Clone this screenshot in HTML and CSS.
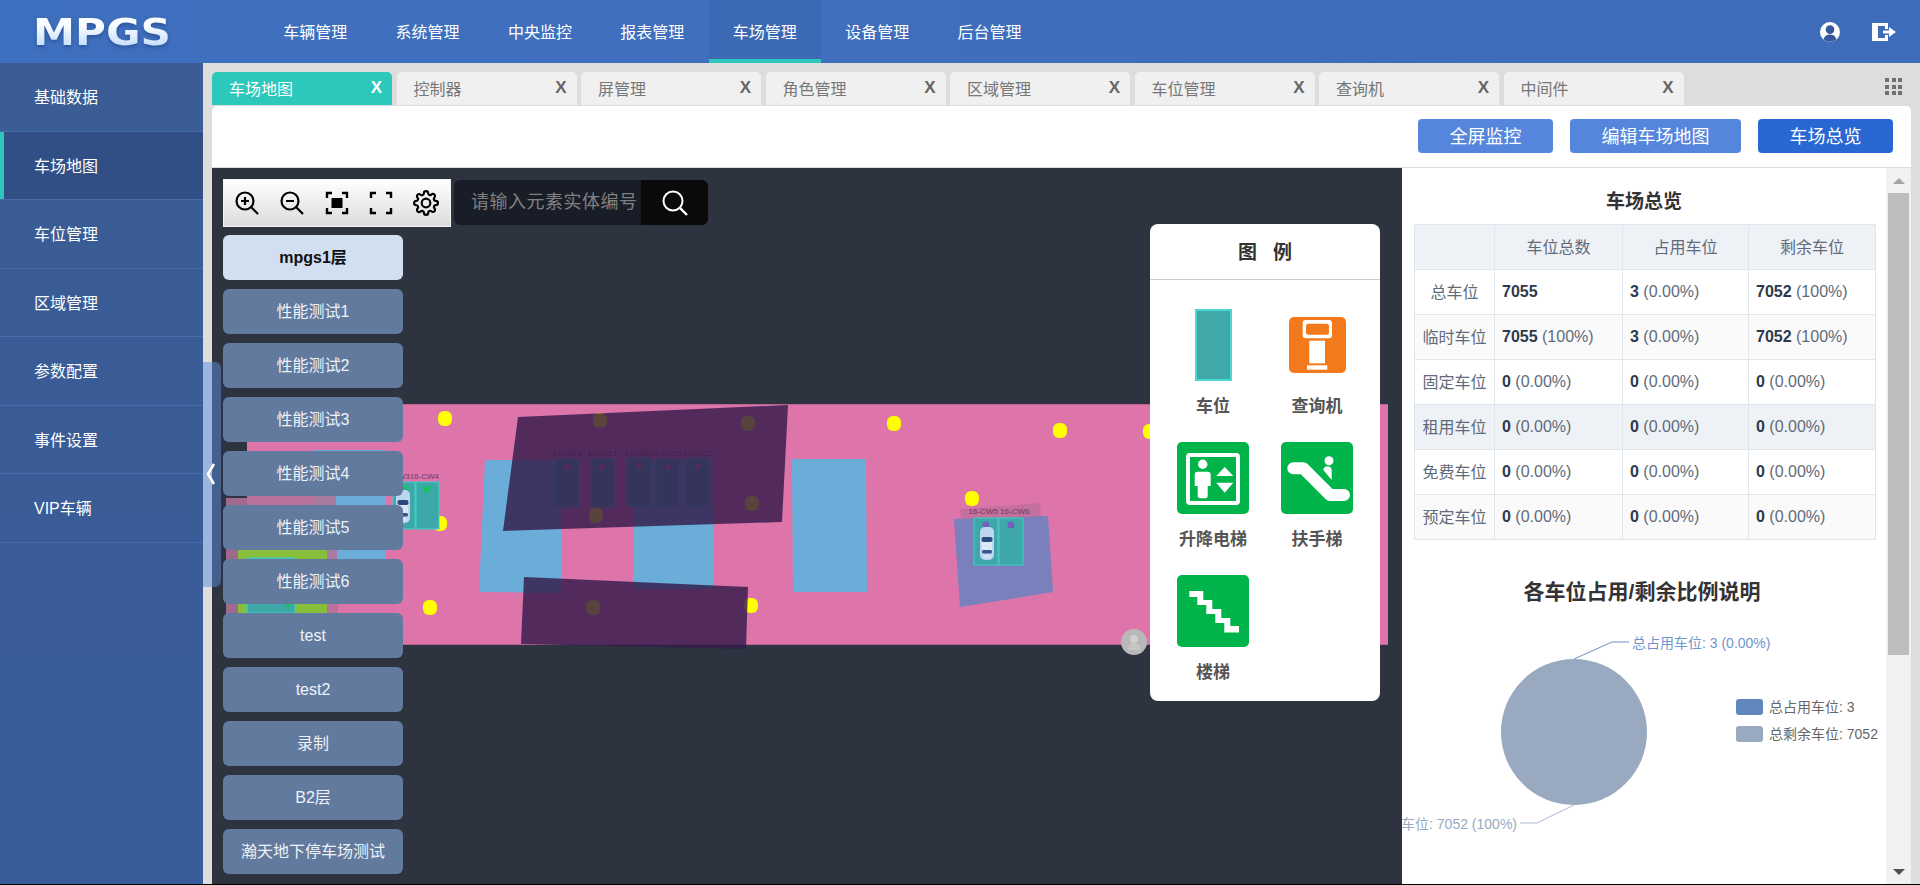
FILE: index.html
```html
<!DOCTYPE html>
<html lang="zh-CN">
<head>
<meta charset="utf-8">
<title>MPGS 车场地图</title>
<link rel="stylesheet" href="styles.css">
</head>
<body>
<div class="app">
  <header class="topbar">
    <div class="logo"><span class="logo-text">MPGS</span></div>
    <nav class="topnav">
      <a class="topnav-item">车辆管理</a>
      <a class="topnav-item">系统管理</a>
      <a class="topnav-item">中央监控</a>
      <a class="topnav-item">报表管理</a>
      <a class="topnav-item is-active">车场管理</a>
      <a class="topnav-item">设备管理</a>
      <a class="topnav-item">后台管理</a>
    </nav>
    <div class="top-icons">
      <svg class="top-icon" width="20" height="20" viewBox="0 0 20 20"><circle cx="10" cy="10" r="10" fill="#fff"/><circle cx="10" cy="7.6" r="4.3" fill="#35589a"/><path d="M3.6 17.2c1-3.4 3.4-4.6 6.4-4.6s5.400 1.200 6.400 4.600a9.200 9.200 0 0 1-12.800 0z" fill="#35589a"/></svg>
      <svg class="top-icon" width="24" height="18" viewBox="0 0 24 18"><path d="M0 0h16v6h-3V3H6v12h7v-3h3v6H0z" fill="#fff"/><path d="M0 0h5v18H0z" fill="#fff"/><path d="M11 7.500h6V4l7 5-7 5v-3.500h-6z" fill="#fff"/></svg>
    </div>
  </header>

  <div class="body">
    <aside class="sidebar">
      <a class="side-item">基础数据</a>
      <a class="side-item is-active">车场地图</a>
      <a class="side-item">车位管理</a>
      <a class="side-item">区域管理</a>
      <a class="side-item">参数配置</a>
      <a class="side-item">事件设置</a>
      <a class="side-item">VIP车辆</a>
    </aside>
    <div class="collapse-handle">
      <svg width="18" height="225" viewBox="0 0 18 225"><path d="M11 102 L5 112 L11 122" fill="none" stroke="#fff" stroke-width="2.500"/></svg>
    </div>

    <main class="main">
      <div class="tabbar">
        <div class="tabs">
          <div class="tab is-active"><span>车场地图</span><b class="tab-x">X</b></div>
          <div class="tab"><span>控制器</span><b class="tab-x">X</b></div>
          <div class="tab"><span>屏管理</span><b class="tab-x">X</b></div>
          <div class="tab"><span>角色管理</span><b class="tab-x">X</b></div>
          <div class="tab"><span>区域管理</span><b class="tab-x">X</b></div>
          <div class="tab"><span>车位管理</span><b class="tab-x">X</b></div>
          <div class="tab"><span>查询机</span><b class="tab-x">X</b></div>
          <div class="tab"><span>中间件</span><b class="tab-x">X</b></div>
        </div>
        <div class="tab-grid"><i></i><i></i><i></i><i></i><i></i><i></i><i></i><i></i><i></i></div>
      </div>

      <section class="panel">
        <div class="panel-actions">
          <button class="btn">全屏监控</button>
          <button class="btn btn-wide">编辑车场地图</button>
          <button class="btn btn-primary">车场总览</button>
        </div>

        <div class="panel-content">
          <div class="map">
            <svg class="map-canvas" width="1190" height="716" viewBox="212 168 1190 716">
              <defs>
                <g id="car">
                  <rect x="0" y="0" width="14" height="33" rx="5" fill="#bcd6f2"/>
                  <rect x="1.500" y="10" width="11" height="5" rx="2" fill="#2c4a80"/>
                  <rect x="2" y="15" width="10" height="8" fill="#dbe8f8"/>
                  <rect x="2" y="23" width="10" height="3.500" rx="1.500" fill="#3a5688"/>
                  <rect x="3" y="28" width="8" height="3" fill="#d3e2f4"/>
                </g>
              </defs>

              <rect x="226" y="498" width="21" height="152" fill="#a06a8e"/>
              <rect x="247" y="404" width="1141" height="241" fill="#dd75ab"/>
              <rect x="247" y="404" width="1141" height="1" fill="#b9648f"/>
              <rect x="247" y="644" width="1141" height="1" fill="#b9648f"/>
              <rect x="247" y="496" width="91" height="154" fill="#b8729a"/>
              <rect x="314" y="450" width="72" height="50" fill="#6aadd8"/>
              <rect x="314" y="496" width="22" height="9" fill="#a87a9e"/>
              <rect x="336" y="496" width="50" height="94" fill="#6aadd8"/>
              <rect x="327" y="505" width="10" height="54" fill="#aa7aa0"/>
              <rect x="238" y="535" width="89" height="78" fill="#88bf3a"/>
              <rect x="247" y="558" width="48" height="55" fill="#3ea8a8" stroke="#3fd0c8"/>
              <circle cx="288" cy="604" r="3" fill="#18c060"/>

              <polygon points="485,460 561,460 562,593 479,592" fill="#6aadd8"/>
              <polygon points="633,460 712,460 714,589 633,589" fill="#6aadd8"/>
              <polygon points="792,459 866,459 867,592 793,592" fill="#6aadd8"/>

              <g class="yellow">
                <rect x="438" y="411" width="14" height="15" rx="6"/>
                <rect x="593" y="413" width="14" height="15" rx="6"/>
                <rect x="741" y="416" width="14" height="15" rx="6"/>
                <rect x="745" y="496" width="14" height="15" rx="6"/>
                <rect x="589" y="508" width="14" height="15" rx="6"/>
                <rect x="433" y="516" width="14" height="15" rx="6"/>
                <rect x="423" y="600" width="14" height="15" rx="6"/>
                <rect x="586" y="600" width="14" height="15" rx="6"/>
                <rect x="744" y="598" width="14" height="15" rx="6"/>
                <rect x="887" y="416" width="14" height="15" rx="6"/>
                <rect x="1053" y="423" width="14" height="15" rx="6"/>
                <rect x="1143" y="424" width="14" height="15" rx="6"/>
                <rect x="965" y="491" width="14" height="15" rx="6"/>
              </g>

              <g class="slot">
                <rect x="393" y="482" width="22" height="47"/>
                <rect x="416" y="482" width="23" height="47"/>
              </g>
              <circle cx="404" cy="489" r="3.500" fill="#18c060"/>
              <circle cx="427" cy="489" r="3.500" fill="#18c060"/>
              <use href="#car" x="396" y="490"/>
              <text class="slot-label" x="439" y="479" text-anchor="end">16-CW316-CW4</text>

              <g class="slot">
                <rect x="555" y="459" width="24" height="48"/>
                <rect x="591" y="459" width="23" height="48"/>
                <rect x="627" y="458" width="24" height="48"/>
                <rect x="656" y="459" width="23" height="47"/>
                <rect x="686" y="458" width="23" height="48"/>
              </g>
              <g class="slot-dot">
                <circle cx="567" cy="467" r="3"/>
                <circle cx="602" cy="467" r="3"/>
                <circle cx="639" cy="466" r="3"/>
                <circle cx="668" cy="467" r="3"/>
                <circle cx="698" cy="466" r="3"/>
              </g>
              <g class="slot-label">
                <text x="567" y="456" text-anchor="middle">1-CW14</text>
                <text x="602" y="456" text-anchor="middle">1-CW13</text>
                <text x="639" y="456" text-anchor="middle">1-CW10</text>
                <text x="668" y="456" text-anchor="middle">1-CW11</text>
                <text x="698" y="456" text-anchor="middle">1-CW12</text>
              </g>

              <polygon class="dark-zone" points="518,417 788,405 782,522 503,531"/>
              <polygon class="dark-zone" points="524,577 748,587 746,649 521,644"/>

              <polygon points="960,509 1040,503 1041,518 961,520" fill="#c4709c"/>
              <polygon points="954,519 1048,516 1053,592 960,607" fill="#7a80bc"/>
              <g class="slot">
                <rect x="974" y="518" width="24" height="47"/>
                <rect x="999" y="518" width="24" height="47"/>
              </g>
              <circle cx="986" cy="525" r="3.500" fill="#7060c0"/>
              <circle cx="1011" cy="525" r="3.500" fill="#7060c0"/>
              <use href="#car" x="980" y="527" />
              <text class="slot-label" x="999" y="514" text-anchor="middle">16-CW5 16-CW6</text>

              <circle cx="1134" cy="642" r="13" fill="#b8b8b8"/>
              <circle cx="1134" cy="639" r="4" fill="#d0d0d0"/>
              <path d="M1128 650c0-5 2-7 6-7s6 2 6 7z" fill="#c6c6c6"/>
            </svg>

            <div class="map-tools">
              <div class="tool-group">
                <svg class="tool" width="26" height="26" viewBox="0 0 26 26"><circle cx="11" cy="11" r="8.500" fill="none" stroke="#000" stroke-width="2.200"/><path d="M17 17l7 7M7 11h8M11 7v8" stroke="#000" stroke-width="2.200" fill="none"/></svg>
                <svg class="tool" width="26" height="26" viewBox="0 0 26 26"><circle cx="11" cy="11" r="8.500" fill="none" stroke="#000" stroke-width="2.200"/><path d="M17 17l7 7M7 11h8" stroke="#000" stroke-width="2.200" fill="none"/></svg>
                <svg class="tool" width="26" height="26" viewBox="0 0 26 26"><path d="M8 3H3v5M18 3h5v5M8 23H3v-5M18 23h5v-5" fill="none" stroke="#000" stroke-width="2.400"/><rect x="7.500" y="8" width="11" height="10"/></svg>
                <svg class="tool" width="26" height="26" viewBox="0 0 26 26"><path d="M8 3H3v5M18 3h5v5M8 23H3v-5M18 23h5v-5" fill="none" stroke="#000" stroke-width="2.400"/></svg>
                <svg class="tool" width="26" height="26" viewBox="0 0 24 24"><circle cx="12" cy="12" r="4" fill="none" stroke="#000" stroke-width="2"/><path fill="none" stroke="#000" stroke-width="2" d="M19.400 15a1.650 1.650 0 0 0 .33 1.820l.06.06a2 2 0 0 1 0 2.830 2 2 0 0 1-2.830 0l-.06-.06a1.650 1.650 0 0 0-1.820-.33 1.650 1.650 0 0 0-1 1.510V21a2 2 0 0 1-2 2 2 2 0 0 1-2-2v-.09A1.650 1.650 0 0 0 9 19.400a1.650 1.650 0 0 0-1.820.33l-.06.06a2 2 0 0 1-2.830 0 2 2 0 0 1 0-2.830l.06-.06a1.650 1.650 0 0 0 .33-1.820 1.650 1.650 0 0 0-1.510-1H3a2 2 0 0 1-2-2 2 2 0 0 1 2-2h.09A1.650 1.650 0 0 0 4.600 9a1.650 1.650 0 0 0-.33-1.820l-.06-.06a2 2 0 0 1 0-2.830 2 2 0 0 1 2.830 0l.06.06a1.650 1.650 0 0 0 1.820.33H9a1.650 1.650 0 0 0 1-1.510V3a2 2 0 0 1 2-2 2 2 0 0 1 2 2v.09a1.650 1.650 0 0 0 1 1.510 1.650 1.650 0 0 0 1.820-.33l.06-.06a2 2 0 0 1 2.830 0 2 2 0 0 1 0 2.830l-.06.06a1.650 1.650 0 0 0-.33 1.820V9a1.650 1.650 0 0 0 1.510 1H21a2 2 0 0 1 2 2 2 2 0 0 1-2 2h-.09a1.650 1.650 0 0 0-1.510 1z"/></svg>
              </div>
              <div class="search">
                <span class="search-input">请输入元素实体编号</span>
                <span class="search-btn"><svg width="28" height="28" viewBox="0 0 28 28"><circle cx="12" cy="12" r="9.500" fill="none" stroke="#fff" stroke-width="2"/><path d="M19 19l7 7" stroke="#fff" stroke-width="2.400"/></svg></span>
              </div>
            </div>

            <div class="floors">
              <a class="floor is-active">mpgs1层</a>
              <a class="floor">性能测试1</a>
              <a class="floor">性能测试2</a>
              <a class="floor">性能测试3</a>
              <a class="floor">性能测试4</a>
              <a class="floor">性能测试5</a>
              <a class="floor">性能测试6</a>
              <a class="floor">test</a>
              <a class="floor">test2</a>
              <a class="floor">录制</a>
              <a class="floor">B2层</a>
              <a class="floor">瀚天地下停车场测试</a>
            </div>

            <div class="legend">
              <div class="legend-title">图例</div>
              <div class="legend-grid">
                <div class="legend-cell">
                  <div class="legend-icon"><svg width="37" height="72" viewBox="0 0 37 72"><rect x="1" y="1" width="35" height="70" fill="#40a8a8" stroke="#4ad8d0" stroke-width="2"/></svg></div>
                  <div class="legend-label">车位</div>
                </div>
                <div class="legend-cell">
                  <div class="legend-icon"><svg width="57" height="56" viewBox="0 0 57 56"><rect width="57" height="56" rx="5" fill="#f37a1c"/><rect x="13.700" y="3" width="29.300" height="18.300" rx="3" fill="#fff"/><rect x="17" y="6.700" width="23" height="11" rx="2.500" fill="#f37a1c"/><rect x="20.300" y="23.700" width="15.700" height="22.600" fill="#fff"/><rect x="18" y="48.300" width="20.300" height="4.400" fill="#fff"/></svg></div>
                  <div class="legend-label">查询机</div>
                </div>
                <div class="legend-cell">
                  <div class="legend-icon"><svg width="72" height="72" viewBox="0 0 72 72"><rect width="72" height="72" rx="5" fill="#00b44a"/><rect x="11" y="13" width="50" height="48" rx="2" fill="none" stroke="#fff" stroke-width="4"/><circle cx="25.700" cy="22.300" r="4.700" fill="#fff"/><path d="M20.500 29.700h10.400a3 3 0 0 1 2.800 3v11.300h-3V53a3 3 0 0 1-3 3.300h-4a3 3 0 0 1-3-3.300V44h-3V32.700a3 3 0 0 1 2.800-3z" fill="#fff"/><path d="M47.700 25L56.300 34H39.300zM39.300 40.700H56.300L47.700 50.700z" fill="#fff"/></svg></div>
                  <div class="legend-label">升降电梯</div>
                </div>
                <div class="legend-cell">
                  <div class="legend-icon"><svg width="72" height="72" viewBox="0 0 72 72"><rect width="72" height="72" rx="5" fill="#00b44a"/><path d="M12.300 26.300h10L49 53h14" fill="none" stroke="#fff" stroke-width="12" stroke-linecap="round" stroke-linejoin="round"/><circle cx="48" cy="18.700" r="4.500" fill="#fff"/><path d="M42.300 28c0-2.500 2-3.800 4.200-3.800s4.200 1.500 4.200 4V38z" fill="#fff"/></svg></div>
                  <div class="legend-label">扶手梯</div>
                </div>
                <div class="legend-cell">
                  <div class="legend-icon"><svg width="72" height="72" viewBox="0 0 72 72"><rect width="72" height="72" rx="5" fill="#00b44a"/><path d="M12.300 16H26.300V25H35.300V34H44.300V43H53.300V51H62V57.500H47.300V48H38.300V39H29.300V30H20.300V22H12.300z" fill="#fff"/></svg></div>
                  <div class="legend-label">楼梯</div>
                </div>
              </div>
            </div>
          </div>

          <div class="side">
            <div class="side-body">
              <h2 class="side-title">车场总览</h2>
              <table class="stats">
                <colgroup><col class="c0"><col class="c1"><col class="c2"><col class="c3"></colgroup>
                <thead>
                  <tr><th></th><th>车位总数</th><th>占用车位</th><th>剩余车位</th></tr>
                </thead>
                <tbody>
                  <tr><th>总车位</th><td><b>7055</b></td><td><b>3</b> (0.00%)</td><td><b>7052</b> (100%)</td></tr>
                  <tr class="alt"><th>临时车位</th><td><b>7055</b> (100%)</td><td><b>3</b> (0.00%)</td><td><b>7052</b> (100%)</td></tr>
                  <tr><th>固定车位</th><td><b>0</b> (0.00%)</td><td><b>0</b> (0.00%)</td><td><b>0</b> (0.00%)</td></tr>
                  <tr class="hover"><th>租用车位</th><td><b>0</b> (0.00%)</td><td><b>0</b> (0.00%)</td><td><b>0</b> (0.00%)</td></tr>
                  <tr><th>免费车位</th><td><b>0</b> (0.00%)</td><td><b>0</b> (0.00%)</td><td><b>0</b> (0.00%)</td></tr>
                  <tr class="alt"><th>预定车位</th><td><b>0</b> (0.00%)</td><td><b>0</b> (0.00%)</td><td><b>0</b> (0.00%)</td></tr>
                </tbody>
              </table>
              <h2 class="side-title chart-title">各车位占用/剩余比例说明</h2>
              <svg class="chart" width="484" height="273" viewBox="1402 611 484 273">
                <circle cx="1574" cy="732" r="73" fill="#98a9c0"/>
                <path d="M1574 659L1612 642H1629" fill="none" stroke="#6b93c9" stroke-width="1"/>
                <path d="M1574 805L1537 823H1520" fill="none" stroke="#aebbcf" stroke-width="1"/>
                <text class="pie-label up" x="1632" y="648">总占用车位: 3 (0.00%)</text>
                <text class="pie-label down" x="1517" y="829" text-anchor="end">总剩余车位: 7052 (100%)</text>
                <rect x="1736" y="699" width="27" height="16" rx="3" fill="#6087bb"/>
                <rect x="1736" y="726" width="27" height="16" rx="3" fill="#98a9c0"/>
                <text class="chart-legend" x="1769" y="712">总占用车位: 3</text>
                <text class="chart-legend" x="1769" y="739">总剩余车位: 7052</text>
              </svg>
            </div>
            <div class="scrollbar">
              <div class="sb-btn"><i class="sb-up"></i></div>
              <div class="sb-thumb"></div>
              <div class="sb-btn sb-end"><i class="sb-down"></i></div>
            </div>
          </div>
        </div>
      </section>
    </main>
  </div>
</div>
</body>
</html>
```

FILE: styles.css
```css
* { box-sizing: border-box; }
html, body { margin: 0; padding: 0; height: 100%; background: #000; overflow: hidden; }
body { font-family: "Liberation Sans", "Noto Sans CJK SC", sans-serif; font-size: 16px; color: #333; }
.app { height: 884px; display: flex; flex-direction: column; overflow: hidden; }

/* top bar */
.topbar { flex: 0 0 63px; height: 63px; display: flex; align-items: stretch; background: linear-gradient(90deg, #3f70bf, #3e6cb9); color: #fff; }
.logo { flex: 0 0 259px; padding: 2px 0 0 33px; display: flex; align-items: center; }
.logo-text { display: inline-block; font-family: "DejaVu Sans", sans-serif; font-weight: 700; font-size: 37px; line-height: 40px; letter-spacing: 0; transform: scaleX(1.14); transform-origin: left center; background: linear-gradient(180deg, #fafdff 30%, #b4d4fa 100%); -webkit-background-clip: text; background-clip: text; color: transparent; filter: drop-shadow(0 2px 2px rgba(20, 50, 110, .5)); }
.topnav { display: flex; height: 63px; }
.topnav-item { width: 112.400px; height: 63px; padding-top: 1px; text-align: center; line-height: 63px; font-size: 16px; color: #fff; }
.topnav-item.is-active { background: #3c69b4; box-shadow: inset 0 -4px 0 #2bc8bb; }
.top-icons { margin-left: auto; display: flex; align-items: center; gap: 32px; padding-right: 24px; }
.top-icon { display: block; }

/* shell */
.body { flex: 1; display: flex; position: relative; min-height: 0; }
.sidebar { flex: 0 0 203px; background: linear-gradient(180deg, #3b5c94, #385c9a); }
.side-item { display: block; height: 68.500px; line-height: 69px; padding-left: 34px; color: #fff; font-size: 16px; border-bottom: 1px solid #4a6bab; }
.side-item.is-active { background: #314f84; box-shadow: inset 4px 0 0 #2bc8bb; }
.collapse-handle { position: absolute; left: 203px; top: 299px; width: 18px; height: 225px; background: rgba(89, 142, 224, .5); border-radius: 0 6px 6px 0; z-index: 5; }
.collapse-handle svg { display: block; }

.main { flex: 1; min-width: 0; display: flex; flex-direction: column; background: #ddd; padding: 9px 9px 0; }

/* tabs */
.tabbar { flex: 0 0 34px; display: flex; justify-content: space-between; }
.tabs { display: flex; gap: 4.500px; height: 33px; }
.tab { width: 180px; height: 33px; display: flex; align-items: center; justify-content: space-between; padding: 0 10px 2px 17px; background: #f0f0f0; border-radius: 5px 5px 0 0; color: #777; font-size: 16px; }
.tab.is-active { background: #2bc8bb; color: #fff; }
.tab-x { font-size: 17px; font-weight: 700; color: #666; }
.tab.is-active .tab-x { color: #fff; }
.tab-grid { width: 17px; height: 17px; margin: 6px 9px 0 0; display: grid; grid-template-columns: repeat(3, 4px); grid-auto-rows: 4px; gap: 2.500px; }
.tab-grid i { background: #707070; }

/* panel */
.panel { flex: 1; min-height: 0; display: flex; flex-direction: column; background: #fff; border-radius: 5px 5px 0 0; overflow: hidden; }
.panel-actions { flex: 0 0 62px; display: flex; justify-content: flex-end; align-items: flex-start; gap: 17px; padding: 13px 18px 0 0; border-bottom: 1px solid #ddd; }
.btn { width: 135px; height: 34px; padding: 0 0 3px; border: 0; border-radius: 4px; background: #5585dc; color: #fff; font: inherit; font-size: 18px; }
.btn-wide { width: 171px; }
.btn-primary { background: #2968d3; }
.panel-content { flex: 1; min-height: 0; display: flex; }

/* map */
.map { flex: 0 0 1190px; position: relative; background: #2d333f; overflow: hidden; }
.map-canvas { position: absolute; left: 0; top: 0; }
.yellow rect { fill: #ffff00; }
.slot rect { fill: #3ea8a8; stroke: #3fd0c8; stroke-width: 1; }
.slot-dot circle { fill: #dd75ab; }
.slot-label, .slot-label text { font-size: 8px; fill: #6a3a66; font-family: "Liberation Sans", sans-serif; }
.dark-zone { fill: rgba(51, 27, 74, .82); }

.map-tools { position: absolute; left: 11px; top: 11px; display: flex; align-items: flex-start; gap: 3px; }
.tool-group { width: 228px; height: 48px; display: flex; align-items: center; justify-content: space-between; padding: 0 11px 0 10px; background: linear-gradient(180deg, #fff, #dcdcdc); border: 1px solid #f4f4f4; }
.tool { display: block; flex: none; }
.search { display: flex; width: 254px; height: 45px; margin-top: 1px; }
.search-input { flex: 1; background: #191d28; color: #808080; font-size: 18px; letter-spacing: .5px; line-height: 45px; padding-left: 17px; border-radius: 6px 0 0 6px; white-space: nowrap; overflow: hidden; }
.search-btn { flex: 0 0 67px; background: #0a0a0a; border-radius: 0 6px 6px 0; display: flex; align-items: center; justify-content: center; }

.floors { position: absolute; left: 11px; top: 67px; width: 180px; display: flex; flex-direction: column; gap: 9px; }
.floor { display: block; height: 45px; line-height: 45px; text-align: center; font-size: 16px; color: #eef2f8; background: #627a9e; border-radius: 6px; }
.floor.is-active { background: #d2dff1; color: #111; font-weight: 700; }

.legend { position: absolute; left: 938px; top: 56px; width: 230px; height: 477px; background: #fff; border-radius: 8px; }
.legend-title { height: 56px; line-height: 58px; text-align: center; font-size: 19px; font-weight: 700; letter-spacing: 16px; padding-left: 16px; color: #333; border-bottom: 1px solid #ccc; }
.legend-grid { display: grid; grid-template-columns: 104px 104px; grid-auto-rows: 133px; padding: 29px 15px 0 11px; }
.legend-cell { text-align: center; }
.legend-icon { height: 72px; display: flex; align-items: center; justify-content: center; }
.legend-icon svg { display: block; }
.legend-label { line-height: 52px; font-size: 17px; font-weight: 700; color: #555; }

/* side */
.side { flex: 1; min-width: 0; display: flex; background: #fff; }
.side-body { flex: 1; min-width: 0; overflow: hidden; }
.side-title { margin: 14px 0 2px; height: 40px; line-height: 40px; font-size: 19px; font-weight: 700; text-align: center; color: #333; }
.chart-title { margin: 31px 0 0; padding-right: 4px; font-size: 21px; line-height: 41px; }
.stats { width: 461px; margin-left: 12px; table-layout: fixed; border-collapse: collapse; font-size: 16px; color: #5f6b7a; }
.c0 { width: 80px; } .c1 { width: 128px; } .c2 { width: 126px; } .c3 { width: 127px; }
.stats th, .stats td { height: 45px; padding: 0; border: 1px solid #dfe6ec; font-weight: 400; white-space: nowrap; }
.stats thead th { background: #eef1f6; text-align: center; color: #5f6b7a; padding-bottom: 2px; }
.stats tbody th { text-align: center; color: #5f6b7a; padding-bottom: 2px; }
.stats td { padding-left: 7px; }
.stats b { color: #2d3a4d; font-weight: 700; }
.stats .alt th, .stats .alt td { background: #fafafa; }
.stats .hover th, .stats .hover td { background: #eef1f6; }
.chart { display: block; }
.pie-label { font-size: 14px; }
.pie-label.up { fill: #6f96cc; }
.pie-label.down { fill: #98a9c0; }
.chart-legend { font-size: 14px; fill: #666; }

.scrollbar { flex: 0 0 25px; display: flex; flex-direction: column; background: #f1f1f1; }
.sb-btn { flex: 0 0 25px; display: flex; align-items: center; justify-content: center; }
.sb-end { margin-top: auto; }
.sb-up { width: 0; height: 0; border: 6px solid transparent; border-top: 0; border-bottom: 6px solid #a3a3a3; }
.sb-down { width: 0; height: 0; border: 6px solid transparent; border-bottom: 0; border-top: 6px solid #505050; }
.sb-thumb { height: 462px; margin: 0 2px; background: #bdbdbd; }
```
